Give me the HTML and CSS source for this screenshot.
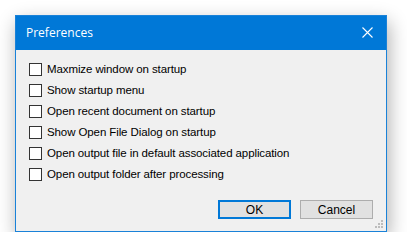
FILE: index.html
```html
<!DOCTYPE html>
<html lang="en">
<head>
    <meta charset="UTF-8">
    <title>Preferences</title>
    <link rel="stylesheet" href="styles.css">
</head>
<body>
    <div class="dialog">
        <div class="title-bar">
            <span class="title">Preferences</span>
            <svg class="close" width="11" height="11" viewBox="0 0 11 11">
                <path d="M0.5 0.5 L10.5 10.5 M10.5 0.5 L0.5 10.5" stroke="#fff" stroke-width="1.1" fill="none"/>
            </svg>
        </div>
        <div class="content">
            <ul class="options">
                <li><span class="check"></span>Maxmize window on startup</li>
                <li><span class="check"></span>Show startup menu</li>
                <li><span class="check"></span>Open recent document on startup</li>
                <li><span class="check"></span>Show Open File Dialog on startup</li>
                <li><span class="check"></span>Open output file in default associated application</li>
                <li><span class="check"></span>Open output folder after processing</li>
            </ul>
            <div class="buttons">
                <button class="btn default">OK</button>
                <button class="btn">Cancel</button>
            </div>
            <!-- size grip -->
            <svg class="grip" width="9" height="9" viewBox="0 0 9 9">
                <rect x="6" y="0" width="2" height="2" fill="#bcbcbc"/>
                <rect x="3" y="3" width="2" height="2" fill="#bcbcbc"/>
                <rect x="6" y="3" width="2" height="2" fill="#bcbcbc"/>
                <rect x="0" y="6" width="2" height="2" fill="#bcbcbc"/>
                <rect x="3" y="6" width="2" height="2" fill="#bcbcbc"/>
                <rect x="6" y="6" width="2" height="2" fill="#bcbcbc"/>
            </svg>
        </div>
    </div>
</body>
</html>
```

FILE: styles.css
```css
body {
    margin: 0;
    background-color: #ffffff;
    font-family: "Liberation Sans", Arial, sans-serif;
}
.dialog {
    margin: 15px 0 0 15px;
    width: 370px;
    height: 215px;
    border: 1px solid #1a82d8;
    background-color: #f0f0f0;
    box-shadow: 2px 7px 18px rgba(0, 0, 0, 0.32);
    display: flex;
    flex-direction: column;
}
.title-bar {
    height: 34px;
    background-color: #0078d7;
    color: #ffffff;
    display: flex;
    align-items: center;
    justify-content: space-between;
    padding: 0 13px 0 10px;
}
.title {
    font-family: "Open Sans", "Liberation Sans", sans-serif;
    font-size: 12px;
    padding-bottom: 2px;
}
.close {
    display: block;
    margin-bottom: 1px;
}
.content {
    flex: 1;
    position: relative;
    display: flex;
    flex-direction: column;
}
.options {
    list-style: none;
    margin: 0;
    padding: 13px 0 0 13px;
}
.options li {
    height: 21px;
    display: flex;
    align-items: flex-start;
    font-size: 11.5px;
    color: #000000;
    line-height: 13px;
    letter-spacing: -0.1px;
}
.check {
    width: 11px;
    height: 11px;
    border: 1px solid #333333;
    background-color: #ffffff;
    margin-right: 5px;
    flex-shrink: 0;
}
.buttons {
    display: flex;
    justify-content: flex-end;
    gap: 9px;
    padding: 11px 13px 0 0;
}
.btn {
    width: 73px;
    height: 19px;
    background-color: #e1e1e1;
    border: 1px solid #adadad;
    font-family: "Liberation Sans", Arial, sans-serif;
    font-size: 12px;
    color: #000000;
    padding: 0;
    margin: 0;
}
.btn.default {
    border: 2px solid #0078d7;
}
.grip {
    position: absolute;
    right: 2px;
    bottom: 2px;
}
```
